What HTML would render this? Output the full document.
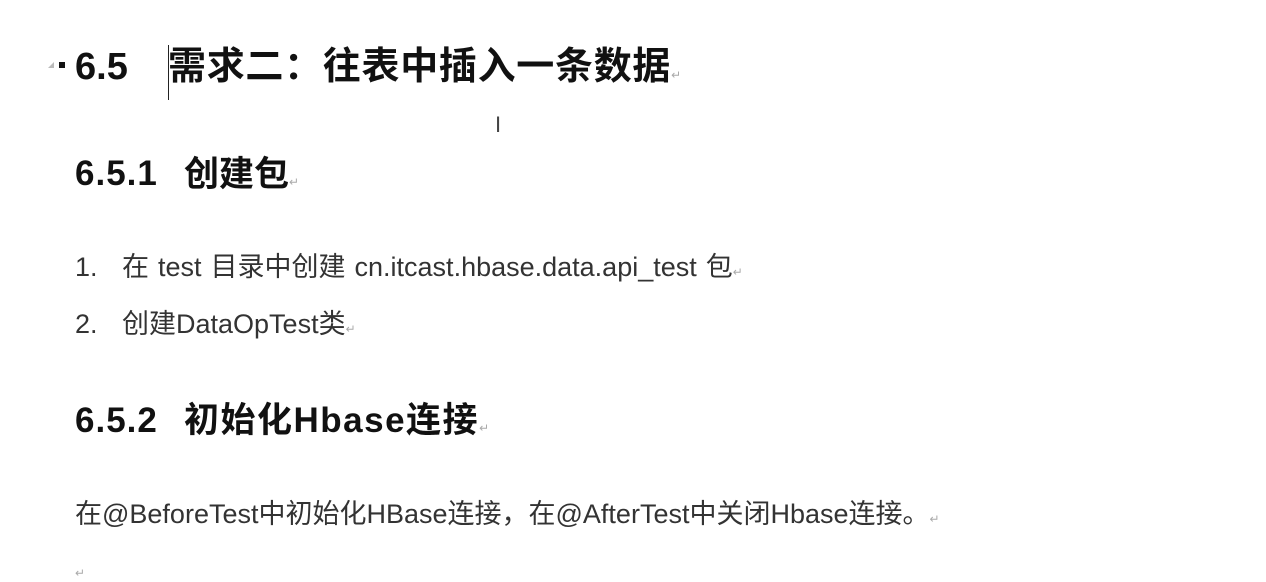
<!DOCTYPE html>
<html><head><meta charset="utf-8"><style>
body{margin:0;width:1266px;height:582px;background:#fff;overflow:hidden;position:relative;font-family:"Liberation Sans","Noto Sans CJK SC",sans-serif;color:#111}
.a{position:absolute;white-space:nowrap;line-height:1}
.h{font-weight:bold}
.m{color:#aaa;font-size:12px;font-weight:normal;letter-spacing:0}
.b{font-size:27px;color:#333;transform-origin:0 0}
</style></head><body>
<div class="a" style="left:48px;top:62px;width:0;height:0;border-left:6px solid transparent;border-bottom:6px solid #bbb"></div>
<div class="a" style="left:59px;top:62px;width:6px;height:6px;background:#111"></div>
<div class="a h" style="left:75px;top:48px;font-size:38px">6.5</div>
<div class="a" style="left:168px;top:45px;width:1px;height:55px;background:#222"></div>
<div class="a h" style="left:168px;top:48px;font-size:38px;letter-spacing:0.7px">需求二：往表中插入一条数据<span class="m">↵</span></div>
<div class="a" style="left:495px;top:114px;font-size:22px;color:#444">I</div>
<div class="a h" style="left:75px;top:156px;font-size:35px;letter-spacing:1px">6.5.1</div>
<div class="a h" style="left:184px;top:157px;font-size:35px">创建包<span class="m">↵</span></div>
<div class="a b" style="left:75px;top:254px">1.</div>
<div class="a b" style="left:122px;top:254px;word-spacing:-3px">在&nbsp; test&nbsp; 目录中创建&nbsp; cn.itcast.hbase.data.api_test&nbsp; 包<span class="m">↵</span></div>
<div class="a b" style="left:75px;top:311px">2.</div>
<div class="a b" style="left:122px;top:311px">创建DataOpTest类<span class="m">↵</span></div>
<div class="a h" style="left:75px;top:403px;font-size:35px;letter-spacing:1px">6.5.2</div>
<div class="a h" style="left:184px;top:403px;font-size:35px;letter-spacing:1.5px">初始化Hbase连接<span class="m">↵</span></div>
<div class="a b" style="left:75px;top:501px">在@BeforeTest中初始化HBase连接，在@AfterTest中关闭Hbase连接。<span class="m">↵</span></div>
<div class="a m" style="left:75px;top:567px">↵</div>
</body></html>
